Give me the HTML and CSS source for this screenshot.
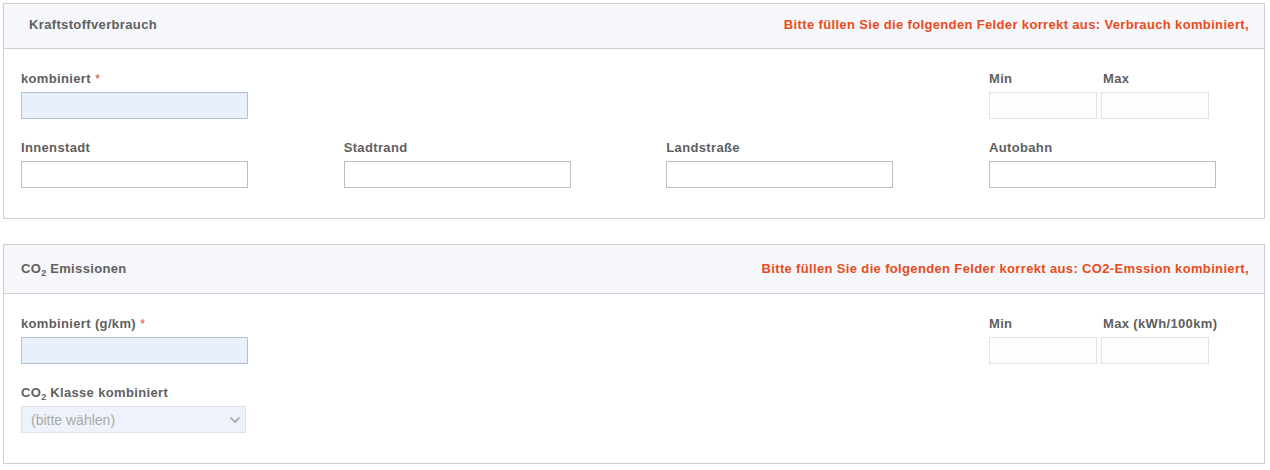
FILE: index.html
```html
<!DOCTYPE html>
<html lang="de">
<head>
    <meta charset="UTF-8">
    <title>Verbrauch und Emissionen</title>
    <link rel="stylesheet" href="styles.css">
</head>
<body>
    <div class="panel">
        <div class="panel-heading">
            <span class="panel-title indent">Kraftstoffverbrauch</span>
            <span class="panel-error">Bitte füllen Sie die folgenden Felder korrekt aus: Verbrauch kombiniert,</span>
        </div>
        <div class="panel-body">
            <div class="row">
                <div class="field">
                    <label>kombiniert <span class="req">*</span></label>
                    <input type="text" class="input required">
                </div>
                <div></div>
                <div></div>
                <div class="field range">
                    <div class="range-item">
                        <label>Min</label>
                        <input type="text" class="input small">
                    </div>
                    <div class="range-item">
                        <label class="shift">Max</label>
                        <input type="text" class="input small">
                    </div>
                </div>
            </div>
            <div class="row">
                <div class="field">
                    <label>Innenstadt</label>
                    <input type="text" class="input">
                </div>
                <div class="field">
                    <label>Stadtrand</label>
                    <input type="text" class="input">
                </div>
                <div class="field">
                    <label>Landstraße</label>
                    <input type="text" class="input">
                </div>
                <div class="field">
                    <label>Autobahn</label>
                    <input type="text" class="input">
                </div>
            </div>
        </div>
    </div>

    <div class="panel">
        <div class="panel-heading tall">
            <span class="panel-title">CO<sub>2</sub> Emissionen</span>
            <span class="panel-error">Bitte füllen Sie die folgenden Felder korrekt aus: CO2-Emssion kombiniert,</span>
        </div>
        <div class="panel-body">
            <div class="row">
                <div class="field">
                    <label>kombiniert (g/km) <span class="req">*</span></label>
                    <input type="text" class="input required">
                </div>
                <div></div>
                <div></div>
                <div class="field range">
                    <div class="range-item">
                        <label>Min</label>
                        <input type="text" class="input small">
                    </div>
                    <div class="range-item">
                        <label class="shift">Max (kWh/100km)</label>
                        <input type="text" class="input small">
                    </div>
                </div>
            </div>
            <div class="row">
                <div class="field">
                    <label>CO<sub>2</sub> Klasse kombiniert</label>
                    <div class="select">
                        <span>(bitte wählen)</span>
                        <svg width="12" height="8" viewBox="0 0 12 8"><path d="M1.5 1.5 L6 6 L10.5 1.5" fill="none" stroke="#9aa4b0" stroke-width="1.6"/></svg>
                    </div>
                </div>
            </div>
        </div>
    </div>
</body>
</html>
```

FILE: styles.css
```css
* {margin: 0; padding: 0; box-sizing: border-box;}

body {
    font-family: "Liberation Sans", Arial, sans-serif;
    font-size: 13px;
    letter-spacing: 0.35px;
    color: #5f5f5f;
    margin: 3px 5px 0 3px;
    background: #fff;
}

.panel {
    border: 1px solid #cfcfcf;
    margin-bottom: 25px;
}

.panel-heading {
    display: flex;
    justify-content: space-between;
    align-items: center;
    background-color: #f6f7fa;
    border-bottom: 1px solid #cfcfcf;
    padding: 0 15px 3px 17px;
    min-height: 45px;
    font-weight: bold;
}
.panel-heading.tall {
    min-height: 49px;
    padding-bottom: 2px;
}

.panel-title {
    color: #5f5f5f;
}
.panel-title.indent {
    padding-left: 8px;
}

.panel-error {
    color: #ea4b1c;
}

sub {
    font-size: 9px;
    vertical-align: -3px;
    line-height: 0;
    letter-spacing: 0;
}

.panel-body {
    padding: 20px 17px 30px 17px;
}

.row {
    display: grid;
    grid-template-columns: repeat(4, 227px);
    column-gap: 95.67px;
}
.row + .row {
    margin-top: 19px;
}

.field label {
    display: block;
    font-weight: bold;
    line-height: 20px;
    margin-bottom: 3px;
    color: #5f5f5f;
    white-space: nowrap;
}

.req {
    color: #e04a3a;
    font-weight: normal;
}

.input {
    display: block;
    width: 227px;
    height: 27px;
    border: 1px solid #bdbdbd;
    background: #fff;
    font-family: inherit;
    font-size: 13px;
    outline: none;
}
.input.required {
    background-color: #e8f0fd;
    border-color: #b9bfc8;
}
.input.small {
    width: 108px;
    border-color: #e2e2e2;
    background: #fdfdfd;
}

.range {
    display: flex;
    gap: 4px;
}
.shift {
    padding-left: 2px;
}

.select {
    display: flex;
    justify-content: space-between;
    align-items: center;
    width: 225px;
    height: 27px;
    padding: 0 4px 0 9px;
    border: 1px solid #dde3ec;
    background: #eef3fb;
    color: #a9a9a9;
    font-size: 14px;
    letter-spacing: 0;
}
```
